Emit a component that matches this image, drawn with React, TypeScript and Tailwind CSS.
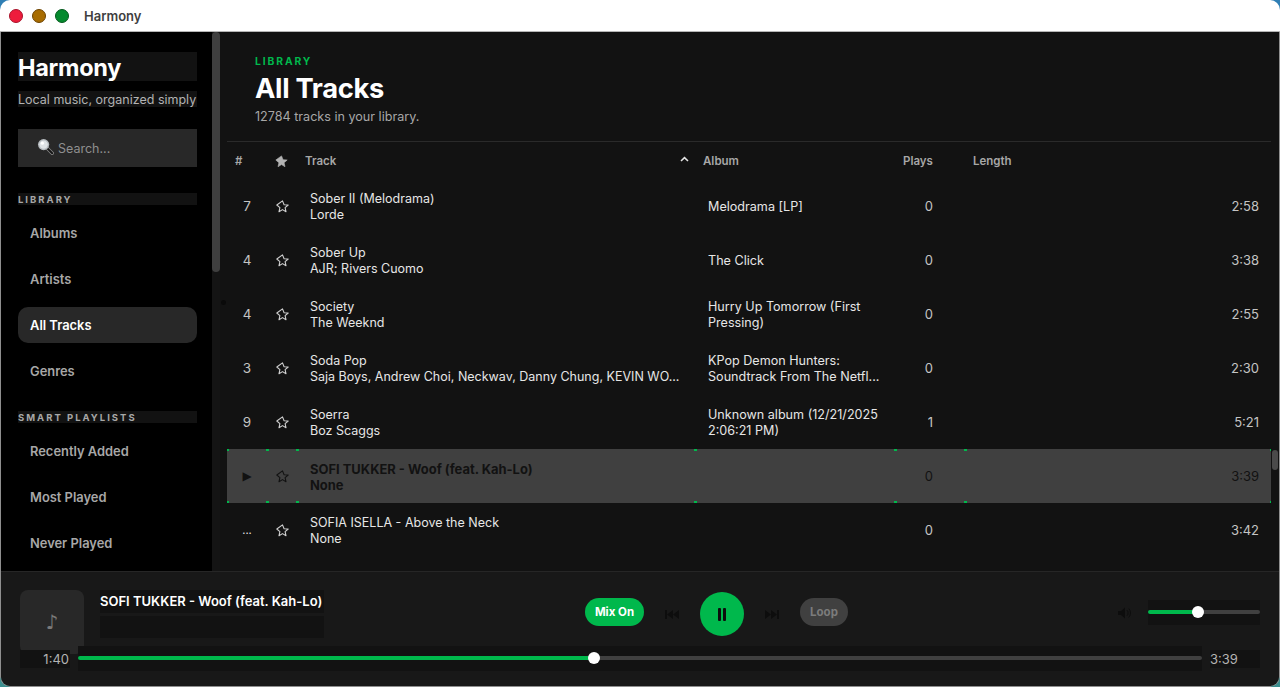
const tracks = [
  { no: "7", title: "Sober II (Melodrama)", artist: "Lorde", album: ["Melodrama [LP]"], plays: 0, length: "2:58" },
  { no: "4", title: "Sober Up", artist: "AJR; Rivers Cuomo", album: ["The Click"], plays: 0, length: "3:38" },
  { no: "4", title: "Society", artist: "The Weeknd", album: ["Hurry Up Tomorrow (First", "Pressing)"], plays: 0, length: "2:55" },
  { no: "3", title: "Soda Pop", artist: "Saja Boys, Andrew Choi, Neckwav, Danny Chung, KEVIN WO...", album: ["KPop Demon Hunters:", "Soundtrack From The Netfl..."], plays: 0, length: "2:30" },
  { no: "9", title: "Soerra", artist: "Boz Scaggs", album: ["Unknown album (12/21/2025", "2:06:21 PM)"], plays: 1, length: "5:21" },
  { no: "▶", title: "SOFI TUKKER - Woof (feat. Kah-Lo)", artist: "None", album: [], plays: 0, length: "3:39", current: true },
  { no: "...", title: "SOFIA ISELLA - Above the Neck", artist: "None", album: [], plays: 0, length: "3:42" },
];

const libraryNav = ["Albums", "Artists", "All Tracks", "Genres"];
const smartNav = ["Recently Added", "Most Played", "Never Played"];

const rowGrid = "grid grid-cols-[40px_30px_398px_200px_70px_307px]";
const starPoints = "6.5,0.9 8.1,4.7 12.2,5 9.1,7.7 10,11.7 6.5,9.6 3,11.7 3.9,7.7 0.8,5";

const NavItem = ({ label, active }: { label: string; active?: boolean }) => (
  <div
    className={`flex h-9 items-center rounded-[10px] px-3 pt-[2px] text-[12.9px] font-semibold ${
      active ? "bg-[#282828] text-white" : "text-[#a7a7a7]"
    }`}
  >
    {label}
  </div>
);

const SectionLabel = ({ label }: { label: string }) => (
  <div className="h-3 bg-[#121212] text-[9.5px] leading-[14px] font-bold tracking-[2px] text-[#a7a7a7]">{label}</div>
);

const Sidebar = () => (
  <aside className="flex w-[211px] shrink-0 flex-col overflow-hidden bg-black pt-5 pr-[15px] pl-[17px]">
    <div className="h-[29px] bg-[#121212] text-[23.5px] leading-[31px] font-bold tracking-[-0.3px] text-white">Harmony</div>
    <div className="mt-[10px] h-4 bg-[#121212] text-[12.5px] leading-[18px] whitespace-nowrap text-[#b3b3b3]">
      Local music, organized simply
    </div>
    <div className="mt-[22px] flex h-[38px] shrink-0 items-center gap-[4px] bg-[#282828] pl-[19px] text-[12.5px] text-[#8f8f8f]">
      <svg width="17" height="17" viewBox="0 0 17 17" className="-mt-[3px] shrink-0">
        <path d="M10 10 15.2 15.2" stroke="#8a8a8a" strokeWidth="3.4" strokeLinecap="round" />
        <path d="M10.4 10.4 15.2 15.2" stroke="#161616" strokeWidth="2" strokeLinecap="round" />
        <circle cx="6.6" cy="6.6" r="5.6" fill="#b7bcc0" />
        <circle cx="6.6" cy="6.6" r="4.2" fill="#dfe3e6" />
        <circle cx="5.4" cy="5.2" r="1.6" fill="#ffffff" />
      </svg>
      <span className="pt-[2px]">Search...</span>
    </div>
    <div className="mt-[26px] flex flex-col">
      <SectionLabel label="LIBRARY" />
      <div className="mt-[10px] flex flex-col gap-[10px]">
        {libraryNav.map((n) => (
          <NavItem key={n} label={n} active={n === "All Tracks"} />
        ))}
      </div>
    </div>
    <div className="mt-[22px] flex flex-col">
      <SectionLabel label="SMART PLAYLISTS" />
      <div className="mt-[10px] flex flex-col gap-[10px]">
        {smartNav.map((n) => (
          <NavItem key={n} label={n} />
        ))}
      </div>
    </div>
  </aside>
);

// little green marks the focus frame leaves on the playing row
const Marks = () => (
  <>
    <span className="absolute top-0 -left-px h-[2px] w-[3px] bg-[#00b84c]" />
    <span className="absolute bottom-0 -left-px h-[2px] w-[3px] bg-[#00b84c]" />
  </>
);

const Row = ({ track }: { track: (typeof tracks)[number] }) => {
  const text = track.current ? "text-[#121212]" : "text-[#e6e6e6]";
  const cell = track.current ? "relative flex items-center" : "flex items-center";
  return (
    <div className={`${rowGrid} h-[54px] leading-4 ${track.current ? "bg-[#404040]" : ""} ${text}`}>
      <div className={`${cell} justify-center ${track.current ? "font-['DejaVu_Sans'] text-[12px]" : track.no === "..." ? "text-[11px]" : "text-[13.5px] text-[#c4c4c4]"}`}>
        {track.current && <Marks />}
        {track.no}
      </div>
      <div className={`${cell} justify-center`}>
        {track.current && <Marks />}
        <svg width="13" height="13" viewBox="0 0 13 13">
          <polygon points={starPoints} fill="none" stroke={track.current ? "#121212" : "#cfcfcf"} strokeWidth="1.1" strokeLinejoin="round" />
        </svg>
      </div>
      <div className={`${cell} min-w-0 pt-[2px] pl-[13px] ${track.current ? "text-[12.95px] font-bold" : "text-[12.5px]"}`}>
        {track.current && <Marks />}
        <div className="min-w-0">
          <div className="whitespace-nowrap">{track.title}</div>
          <div className="whitespace-nowrap">{track.artist}</div>
        </div>
      </div>
      <div className={`${cell} pt-[2px] pl-[13px] text-[12.6px]`}>
        {track.current && <Marks />}
        <div>
          {track.album.map((line) => (
            <div key={line} className="whitespace-nowrap">{line}</div>
          ))}
        </div>
      </div>
      <div className={`${cell} justify-end pr-8 text-[13px] ${track.current ? "" : "text-[#c4c4c4]"}`}>
        {track.current && <Marks />}
        {track.plays}
      </div>
      <div className={`${cell} justify-end pr-[13px] text-[13px] ${track.current ? "" : "text-[#c4c4c4]"}`}>
        {track.current && <Marks />}
        {track.current && <span className="absolute top-0 -right-px h-[2px] w-[3px] bg-[#00b84c]" />}
        {track.current && <span className="absolute -right-px bottom-0 h-[2px] w-[3px] bg-[#00b84c]" />}
        {track.length}
      </div>
    </div>
  );
};

const TrackList = () => (
  <main className="relative flex min-w-0 flex-1 flex-col bg-[#121212] pr-2 pl-[7px]">
    <header className="h-[110px] shrink-0 border-b border-[#2a2a2a] pt-[23px] pl-[28px]">
      <div className="text-[10.3px] leading-3 font-bold tracking-[1.9px] text-[#00b84c]">LIBRARY</div>
      <h1 className="mt-[4px] text-[27.3px] leading-[36px] font-bold tracking-[-0.3px] text-white">All Tracks</h1>
      <p className="mt-[2px] text-[12.6px] leading-4 text-[#a7a7a7]">12784 tracks in your library.</p>
    </header>
    <div className={`${rowGrid} h-[37px] shrink-0 items-center pt-[2px] text-[11.5px] font-semibold text-[#a7a7a7]`}>
      <div className="pl-2">#</div>
      <div className="pl-2">
        <svg width="13" height="13" viewBox="0 0 13 13" className="-mt-[1px]">
          <polygon points={starPoints} fill="#b3b3b3" stroke="#b3b3b3" strokeWidth="0.6" strokeLinejoin="round" />
        </svg>
      </div>
      <div className="relative pl-2">
        Track
        <svg width="9" height="6" viewBox="0 0 9 6" className="absolute top-[3px] right-[6px]">
          <path d="M1 5 4.5 1.6 8 5" fill="none" stroke="#e6e6e6" strokeWidth="1.5" />
        </svg>
      </div>
      <div className="pl-2">Album</div>
      <div className="pl-2">Plays</div>
      <div className="pl-2">Length</div>
    </div>
    <div className="min-h-0 flex-1 overflow-hidden">
      {tracks.map((t) => (
        <Row key={t.title} track={t} />
      ))}
    </div>
    {/* splitter grip and list scrollbar thumb */}
    <div className="absolute top-[268px] left-[1px] size-[5px] rounded-full bg-[#0a0a0a]" />
    <div className="absolute top-[418px] right-[1px] h-5 w-[6px] rounded-[3px] bg-[#4a4a4a]" />
  </main>
);

const SkipIcon = ({ flip }: { flip?: boolean }) => (
  <svg width="14" height="9" viewBox="0 0 14 9" className={flip ? "rotate-180" : ""} fill="#0d0d0d">
    <rect x="0" y="0" width="2" height="9" />
    <path d="M8 0v9L2 4.5zM14 0v9L8 4.5z" />
  </svg>
);

const Player = () => (
  <footer className="flex h-[115px] shrink-0 flex-col border-t border-[#262626] bg-[#181818] px-[19px]">
    <div className="flex h-[74px] shrink-0 items-start pt-[18px]">
      <div className="flex h-[66px] w-[565px] shrink-0 items-start">
        <div className="flex size-16 items-center justify-center rounded-lg bg-[#282828] font-['DejaVu_Sans'] text-[20px] text-[#7a7a7a]">♪</div>
        <div className="ml-4 w-56">
          <div className="h-[23px] bg-[#121212] text-[13px] leading-[23px] font-semibold whitespace-nowrap text-white">
            SOFI TUKKER - Woof (feat. Kah-Lo)
          </div>
          <div className="mt-[3px] h-[22px] bg-[#121212]" />
        </div>
      </div>
      <div className="flex items-center pt-[2px]">
        <div className="mb-1 flex h-7 w-[59px] items-center justify-center rounded-full bg-[#00b84c] pt-[1px] text-[11.5px] font-bold text-white">Mix On</div>
        <div className="flex w-14 justify-center"><SkipIcon /></div>
        <div className="flex size-11 items-center justify-center rounded-full bg-[#00b84c]">
          <svg width="10" height="13" viewBox="0 0 10 13" fill="#0d0d0d">
            <rect x="1" y="0" width="3" height="13" rx="1" />
            <rect x="6" y="0" width="3" height="13" rx="1" />
          </svg>
        </div>
        <div className="flex w-14 justify-center"><SkipIcon flip /></div>
        <div className="mb-1 flex h-7 w-12 items-center justify-center rounded-full bg-[#404040] pt-[1px] text-[11.5px] font-bold text-[#7c7c7c]">Loop</div>
      </div>
      <div className="ml-auto flex items-center gap-[17px] pt-[10px]">
        <svg width="13" height="12" viewBox="0 0 13 12" fill="#0d0d0d">
          <path d="M0 4h3l4-3.5v11L3 8H0z" />
          <path d="M9 3.2c1.4 1.6 1.4 4 0 5.6M10.8 1.6c2.2 2.6 2.2 6.2 0 8.8" fill="none" stroke="#0d0d0d" />
        </svg>
        <div className="flex h-[25px] w-28 items-center bg-[#121212] pb-px">
          <div className="h-1 w-[50px] rounded-l-full bg-[#00b84c]" />
          <div className="z-10 -mx-[6px] size-3 shrink-0 rounded-full bg-white" />
          <div className="h-1 flex-1 rounded-r-full bg-[#404040]" />
        </div>
      </div>
    </div>
    <div className="flex h-[25px] shrink-0 items-center gap-2">
      <div className="h-[18px] w-[50px] bg-[#121212] pr-px text-right text-[13px] leading-[18px] text-[#b3b3b3]">1:40</div>
      <div className="flex h-[25px] flex-1 items-center bg-[#121212] pb-px">
        <div className="h-1 w-[516px] rounded-l-full bg-[#00b84c]" />
        <div className="z-10 -mx-[6px] size-3 shrink-0 rounded-full bg-white" />
        <div className="h-1 flex-1 rounded-r-full bg-[#404040]" />
      </div>
      <div className="h-[18px] w-[50px] bg-[#121212] text-[13px] leading-[18px] text-[#b3b3b3]">3:39</div>
    </div>
  </footer>
);

export default function App() {
  return (
    <div className="h-[687px] w-[1280px] overflow-hidden bg-gradient-to-b from-[#2f7fb5] to-[#3b8f8f] font-['Inter',sans-serif]">
      <div className="flex h-full flex-col overflow-hidden rounded-[10px]">
        <div className="flex h-8 shrink-0 items-center border-b border-[#b5b5b5] bg-white pl-[9px]">
          <span className="size-[14px] rounded-full border border-[#a8132a] bg-[#ee1c3c]" />
          <span className="ml-[9px] size-[14px] rounded-full border border-[#6d4300] bg-[#a86c00]" />
          <span className="ml-[9px] size-[14px] rounded-full border border-[#04591d] bg-[#058a2e]" />
          <span className="ml-[15px] pt-[2px] text-[13px] font-semibold text-[#3f3f3f]">Harmony</span>
        </div>
        <div className="flex min-h-0 flex-1 flex-col overflow-hidden rounded-b-[10px] border-x border-b border-[#8f8f8f]">
          <div className="flex min-h-0 flex-1">
            <Sidebar />
            <div className="w-2 shrink-0 bg-[#141414]">
              <div className="h-60 rounded-[4px] bg-[#3f3f3f]" />
            </div>
            <TrackList />
          </div>
          <Player />
        </div>
      </div>
    </div>
  );
}
